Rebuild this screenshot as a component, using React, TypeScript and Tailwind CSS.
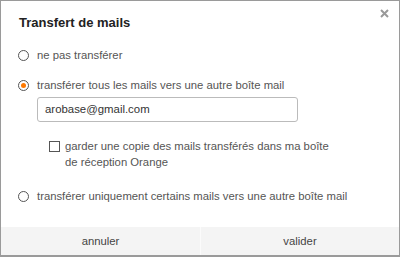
import React from "react";

function Radio({ checked }: { checked?: boolean }) {
  return (
    <span className="flex h-[11px] w-[11px] shrink-0 items-center justify-center rounded-full border border-[#555]">
      {checked && <span className="h-[5px] w-[5px] rounded-full bg-[#ff7900]" />}
    </span>
  );
}

export default function App() {
  return (
    <div
      className="relative flex h-[257px] w-[400px] flex-col border border-b-2 border-[#9a9a9a] bg-white text-[#555]"
      style={{ fontFamily: '"Liberation Sans", Arial, sans-serif' }}
    >
      <button className="absolute right-[10px] top-[8px] flex h-[9px] w-[9px] items-center justify-center">
        <svg width="9" height="9" viewBox="0 0 9 9">
          <path d="M1 1 L8 8 M8 1 L1 8" stroke="#999" strokeWidth="2" />
        </svg>
      </button>
      <div className="flex flex-1 flex-col pl-[17px] pt-[12px]">
        <div className="pl-[1px] text-[13px] font-bold leading-[20px] text-[#222]">Transfert de mails</div>
        <div className="mt-[14px] flex h-[16px] items-center gap-[8px] text-[11.3px] leading-[16px]">
          <Radio />
          <span>ne pas transférer</span>
        </div>
        <div className="mt-[14px] flex h-[16px] items-center gap-[8px] text-[11.3px] leading-[16px]">
          <Radio checked />
          <span>transférer tous les mails vers une autre boîte mail</span>
        </div>
        <div className="ml-[19px] mt-[4px] flex h-[25px] w-[261px] items-center rounded-[3px] border border-[#bbb] px-[7px] text-[11.4px] text-[#333]">
          arobase@gmail.com
        </div>
        <div className="ml-[31px] mt-[16px] flex gap-[5px] text-[11.3px] leading-[16px]">
          <span className="mt-[3px] h-[11px] w-[11px] shrink-0 border border-[#555]" />
          <span className="w-[268px]">
            garder une copie des mails transférés dans ma boîte de réception Orange
          </span>
        </div>
        <div className="mt-[18px] flex h-[16px] items-center gap-[8px] text-[11.3px] leading-[16px]">
          <Radio />
          <span>transférer uniquement certains mails vers une autre boîte mail</span>
        </div>
      </div>
      <div className="grid h-[28px] grid-cols-2 bg-[#f4f4f4] text-[11.3px] text-[#444]">
        <div className="flex items-center justify-center">annuler</div>
        <div className="flex items-center justify-center border-l border-[#fbfbfb]">valider</div>
      </div>
    </div>
  );
}
